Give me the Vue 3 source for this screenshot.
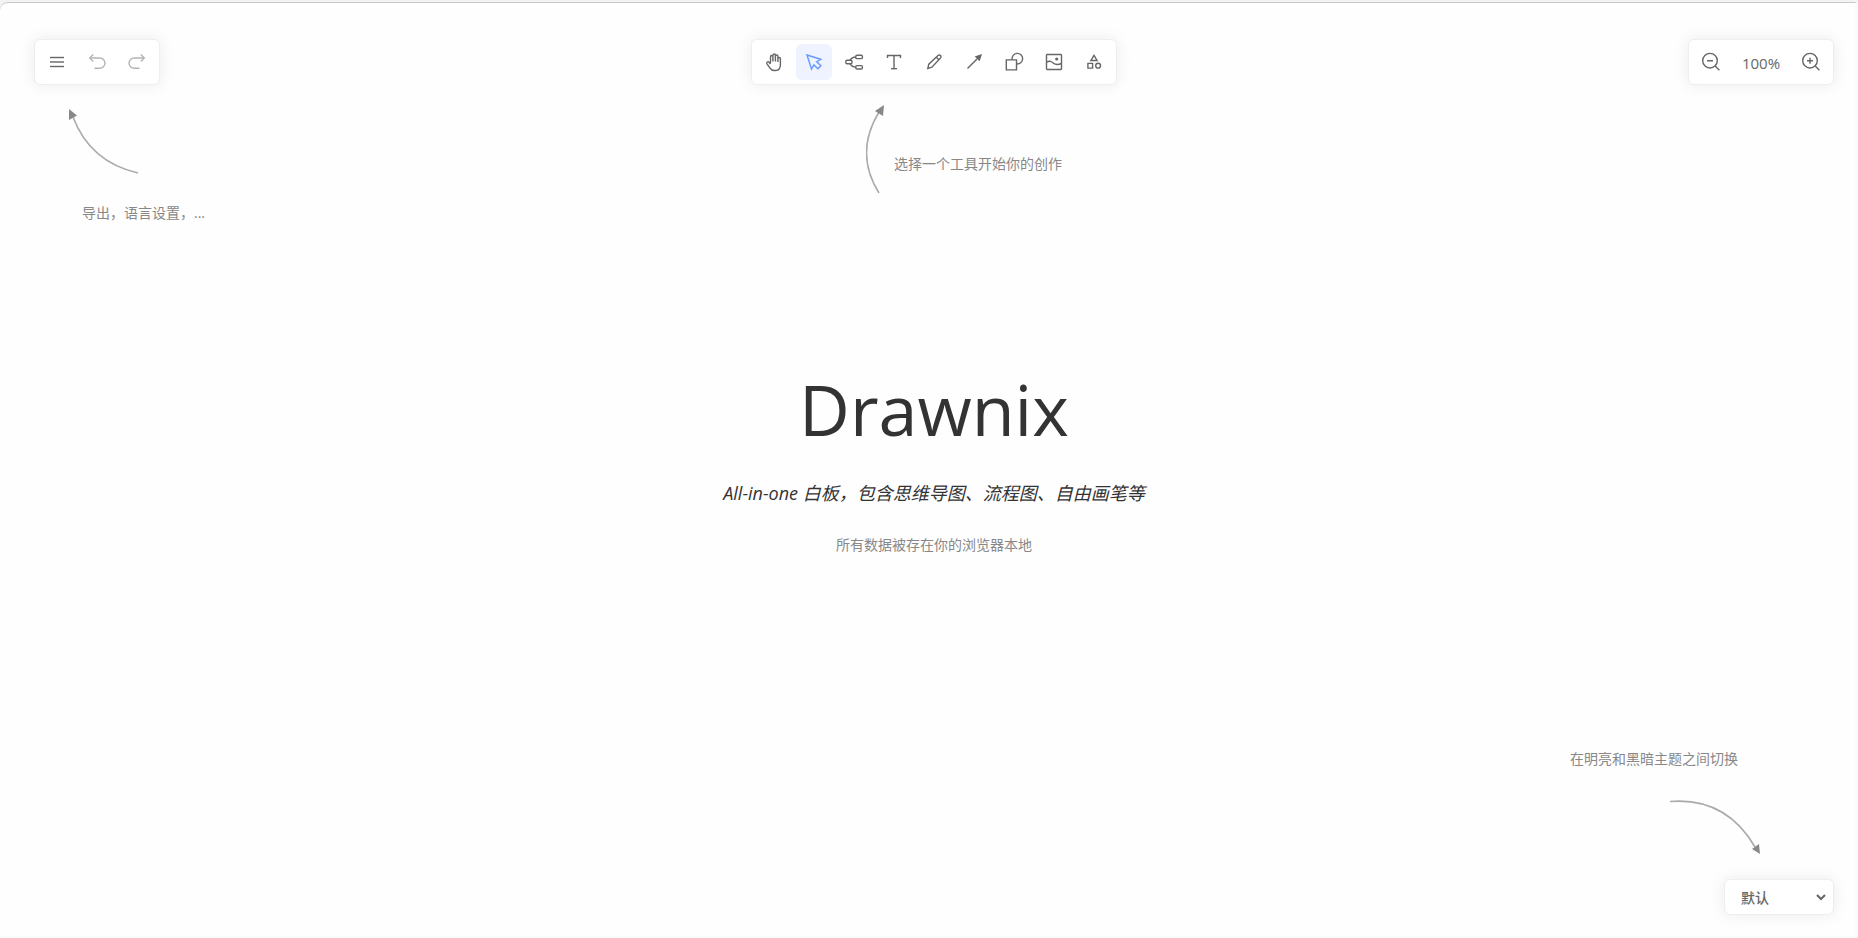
<template>
  <div class="page">
    <main class="board">
      <header class="toolbars">
        <div class="panel panel-left">
          <button
            v-for="item in menuTools"
            :key="item.id"
            type="button"
            class="tool"
            :aria-label="item.label"
            :disabled="item.disabled"
          >
            <svg class="icon" viewBox="0 0 20 20">
              <path v-for="d in item.paths" :key="d" :d="d" />
            </svg>
          </button>
        </div>

        <div class="panel">
          <button
            v-for="item in drawTools"
            :key="item.id"
            type="button"
            class="tool"
            :class="{ active: current === item.id }"
            :aria-label="item.label"
            @click="current = item.id"
          >
            <svg class="icon" viewBox="0 0 20 20">
              <path v-for="d in item.paths" :key="d" :d="d" />
              <path v-for="d in item.fills" :key="d" class="solid" :d="d" />
            </svg>
          </button>
        </div>

        <div class="panel panel-right">
          <button type="button" class="tool" aria-label="缩小" @click="zoomBy(-10)">
            <svg class="icon" viewBox="0 0 20 20">
              <circle cx="9" cy="8.7" r="7.3" />
              <path d="M14.2 14l4.2 4.2M6 8.7h6" />
            </svg>
          </button>
          <button type="button" class="zoom-value" @click="zoom = 100">{{ zoom }}%</button>
          <button type="button" class="tool" aria-label="放大" @click="zoomBy(10)">
            <svg class="icon" viewBox="0 0 20 20">
              <circle cx="9" cy="8.7" r="7.3" />
              <path d="M14.2 14l4.2 4.2M6 8.7h6M9 5.7v6" />
            </svg>
          </button>
        </div>
      </header>

      <section class="hints">
        <div class="hint hint-menu">
          <svg class="arrow" width="72" height="66" viewBox="0 0 72 66">
            <path d="M70 64Q22 53 5 8" />
            <path class="head" d="M1 0L9 6.5L1 11Z" />
          </svg>
          <p>导出，语言设置，...</p>
        </div>
        <div class="hint hint-tools">
          <svg class="arrow" width="20" height="90" viewBox="0 0 20 90">
            <path d="M13 88Q-12 48 13 7" />
            <path class="head" d="M18 0L9 6L17 11Z" />
          </svg>
          <p>选择一个工具开始你的创作</p>
        </div>
      </section>

      <section class="hero">
        <h1>Drawnix</h1>
        <p class="subtitle">All-in-one 白板，包含思维导图、流程图、自由画笔等</p>
        <p class="note">所有数据被存在你的浏览器本地</p>
      </section>

      <footer class="bottom">
        <div class="hint hint-theme">
          <p>在明亮和黑暗主题之间切换</p>
          <svg class="arrow" width="92" height="56" viewBox="0 0 92 56">
            <path d="M0 2.5Q56 -2 85 48" />
            <path class="head" d="M82 50L89 45L90 55Z" />
          </svg>
        </div>
        <div class="panel theme">
          <select v-model="theme" class="theme-select" aria-label="主题">
            <option value="default">默认</option>
            <option value="colorful">缤纷</option>
            <option value="dark">暗夜</option>
          </select>
        </div>
      </footer>
    </main>
  </div>
</template>

<script setup>
import { ref } from 'vue';

const current = ref('selection');
const zoom = ref(100);
const theme = ref('default');

const zoomBy = (step) => {
  zoom.value = Math.min(400, Math.max(10, zoom.value + step));
};

const menuTools = [
  { id: 'menu', label: '菜单', paths: ['M3 5.5h14', 'M3 10h14', 'M3 14.5h14'] },
  {
    id: 'undo',
    label: '撤销',
    disabled: true,
    paths: ['M6.2 2.5L2.7 6l3.5 3.5', 'M3 6h9.8a5.1 5.1 0 0 1 0 10.3H7.5']
  },
  {
    id: 'redo',
    label: '重做',
    disabled: true,
    paths: ['M13.8 2.5L17.3 6l-3.5 3.5', 'M17 6H7.2a5.1 5.1 0 0 0 0 10.3h5.3']
  }
];

const drawTools = [
  {
    id: 'hand',
    label: '移动',
    paths: [
      'M6.5 11V4.7a1.2 1.2 0 0 1 2.4 0V9.5M8.9 9.5V3.3a1.2 1.2 0 0 1 2.5 0V9.5M11.4 9.5V4.2a1.2 1.2 0 0 1 2.5 0V10M13.9 10V6.8a1.2 1.2 0 0 1 2.5 0V12.5c0 4-2 6-5 6h-1.2c-2 0-3-.6-4.2-2.4L3 11.8c-.9-1.5.9-2.7 2-1.5L6.5 12'
    ]
  },
  {
    id: 'selection',
    label: '选择',
    paths: ['M3 3l13.8 4.3-4.1 2.5 4.2 4-3 3-4-3.9L7.5 17Z']
  },
  {
    id: 'mind',
    label: '思维导图',
    paths: [
      'M3 8.3h3.8a1.2 1.2 0 0 1 1.2 1.2v1a1.2 1.2 0 0 1-1.2 1.2H3a1.2 1.2 0 0 1-1.2-1.2v-1A1.2 1.2 0 0 1 3 8.3Z',
      'M13 3.2h4.2a1.2 1.2 0 0 1 1.2 1.2v1a1.2 1.2 0 0 1-1.2 1.2H13a1.2 1.2 0 0 1-1.2-1.2v-1A1.2 1.2 0 0 1 13 3.2Z',
      'M13 13.6h4.2a1.2 1.2 0 0 1 1.2 1.2v1a1.2 1.2 0 0 1-1.2 1.2H13a1.2 1.2 0 0 1-1.2-1.2v-1A1.2 1.2 0 0 1 13 13.6Z',
      'M6 8.3C7.5 5.8 9 5 11.8 5',
      'M6 11.7c1.5 2.5 3 3.5 5.8 3.5'
    ]
  },
  {
    id: 'text',
    label: '文本',
    paths: ['M3.5 6V3.5h13V6', 'M10 3.5v13.2', 'M7 16.7h6']
  },
  {
    id: 'pencil',
    label: '画笔',
    paths: ['M3.8 16.5l1-4.3L14 3.6a1.7 1.7 0 0 1 2.5 2.5L7.9 15.2Z', 'M12.300 5.200l2.600 2.600']
  },
  {
    id: 'arrow',
    label: '箭头',
    paths: ['M3.5 16.5L13 7'],
    fills: ['M18 2L15.6 9.3L10.7 4.5Z']
  },
  {
    id: 'shape',
    label: '形状',
    paths: ['M2.3 7.9h10.2v10H2.3Z', 'M8.2 7.9a5.3 5.3 0 1 1 4.3 4']
  },
  {
    id: 'image',
    label: '图片',
    paths: [
      'M3.2 2.5h13.6a.7.7 0 0 1 .7.7v13.6a.7.7 0 0 1-.7.7H3.2a.7.7 0 0 1-.7-.7V3.2a.7.7 0 0 1 .7-.7Z',
      'M2.5 10.2c3.5-2 5-.7 7 1s4.5 1.7 8 .3'
    ],
    fills: ['M11.1 7a1.6 1.6 0 1 0 3.2 0a1.6 1.6 0 1 0-3.2 0Z']
  },
  {
    id: 'extra',
    label: '更多工具',
    paths: [
      'M10 3.3l3.1 5.2H6.9Z',
      'M3.9 11.4h4.7v4.7H3.9Z',
      'M11.7 13.7a2.4 2.4 0 1 0 4.8 0a2.4 2.4 0 1 0-4.8 0Z'
    ]
  }
];
</script>

<style>
body {
  margin: 0;
}
</style>

<style scoped>
.page {
  box-sizing: border-box;
  display: flex;
  min-height: 100vh;
  padding-top: 2px;
  background-color: #f3f3f3;
  font-family: "Open Sans", "Noto Sans CJK SC", sans-serif;
  color: #333;
}

.board {
  flex: 1;
  display: flex;
  flex-direction: column;
  border-top: 1px solid #c8c8c8;
  border-right: 3px solid #fbfbfb;
  border-bottom: 2px solid #fbfbfb;
  border-top-left-radius: 8px;
  background-color: #fefefe;
}

.toolbars {
  display: grid;
  grid-template-columns: 1fr auto 1fr;
  padding: 36px 21px 0 34px;
}

.panel {
  display: flex;
  gap: 4px;
  padding: 4px;
  border: 1px solid #eee;
  border-radius: 6px;
  background-color: #fff;
  box-shadow: 0 0 16px rgba(0, 0, 0, 0.08);
}

.panel-left {
  justify-self: start;
}

.panel-right {
  justify-self: end;
}

.tool {
  display: flex;
  align-items: center;
  justify-content: center;
  width: 36px;
  height: 36px;
  padding: 0;
  border: none;
  border-radius: 6px;
  background: none;
  color: #666;
  cursor: pointer;
}

.tool:disabled {
  color: #b4b4b4;
  cursor: default;
}

.tool.active {
  background-color: #eff3ff;
  color: #6698ff;
}

.icon {
  width: 20px;
  height: 20px;
  fill: none;
  stroke: currentColor;
  stroke-width: 1.4;
}

.icon .solid {
  fill: currentColor;
  stroke: none;
}

.zoom-value {
  width: 56px;
  padding: 2px 0 0;
  border: none;
  background: none;
  font-family: inherit;
  font-size: 15px;
  color: #666;
  cursor: pointer;
}

.hints {
  display: grid;
  grid-template-columns: 1fr auto 1fr;
  align-items: start;
  padding: 0 21px 0 34px;
}

.hint {
  display: flex;
  font-size: 14px;
  line-height: 20px;
  color: #888;
}

.hint p {
  margin: 0;
}

.arrow {
  flex: none;
  fill: none;
  stroke: #aaa;
  stroke-width: 1.6;
}

.arrow .head {
  fill: #888;
  stroke: none;
}

.hint-menu {
  flex-direction: column;
  gap: 28px;
  padding: 24px 0 0 34px;
}

.hint-menu p {
  padding-left: 14px;
}

.hint-tools {
  align-items: center;
  gap: 8px;
  padding: 20px 0 0 60px;
}

.hint-tools p {
  padding-top: 28px;
}

.hero {
  flex: 1;
  display: flex;
  flex-direction: column;
  align-items: center;
  justify-content: center;
  padding: 0 21px 48px 34px;
  text-align: center;
}

.hero h1 {
  margin: 0;
  font-size: 70px;
  font-weight: 400;
  line-height: 80px;
}

.subtitle {
  margin: 30px 0 0;
  font-size: 18px;
  font-style: italic;
  line-height: 28px;
}

.note {
  margin: 28px 0 0;
  font-size: 14px;
  line-height: 20px;
  color: #888;
}

.bottom {
  display: flex;
  flex-direction: column;
  align-items: flex-end;
  gap: 24px;
  padding: 0 21px 21px 34px;
}

.hint-theme {
  flex-direction: column;
  align-items: flex-end;
  gap: 30px;
  padding-right: 72px;
}

.hint-theme p {
  padding-right: 24px;
}

.theme {
  padding: 0 4px 0 12px;
}

.theme-select {
  width: 92px;
  height: 34px;
  padding: 0;
  border: none;
  background-color: #fff;
  font-family: inherit;
  font-size: 14px;
  font-weight: 500;
  color: #666;
}
</style>
